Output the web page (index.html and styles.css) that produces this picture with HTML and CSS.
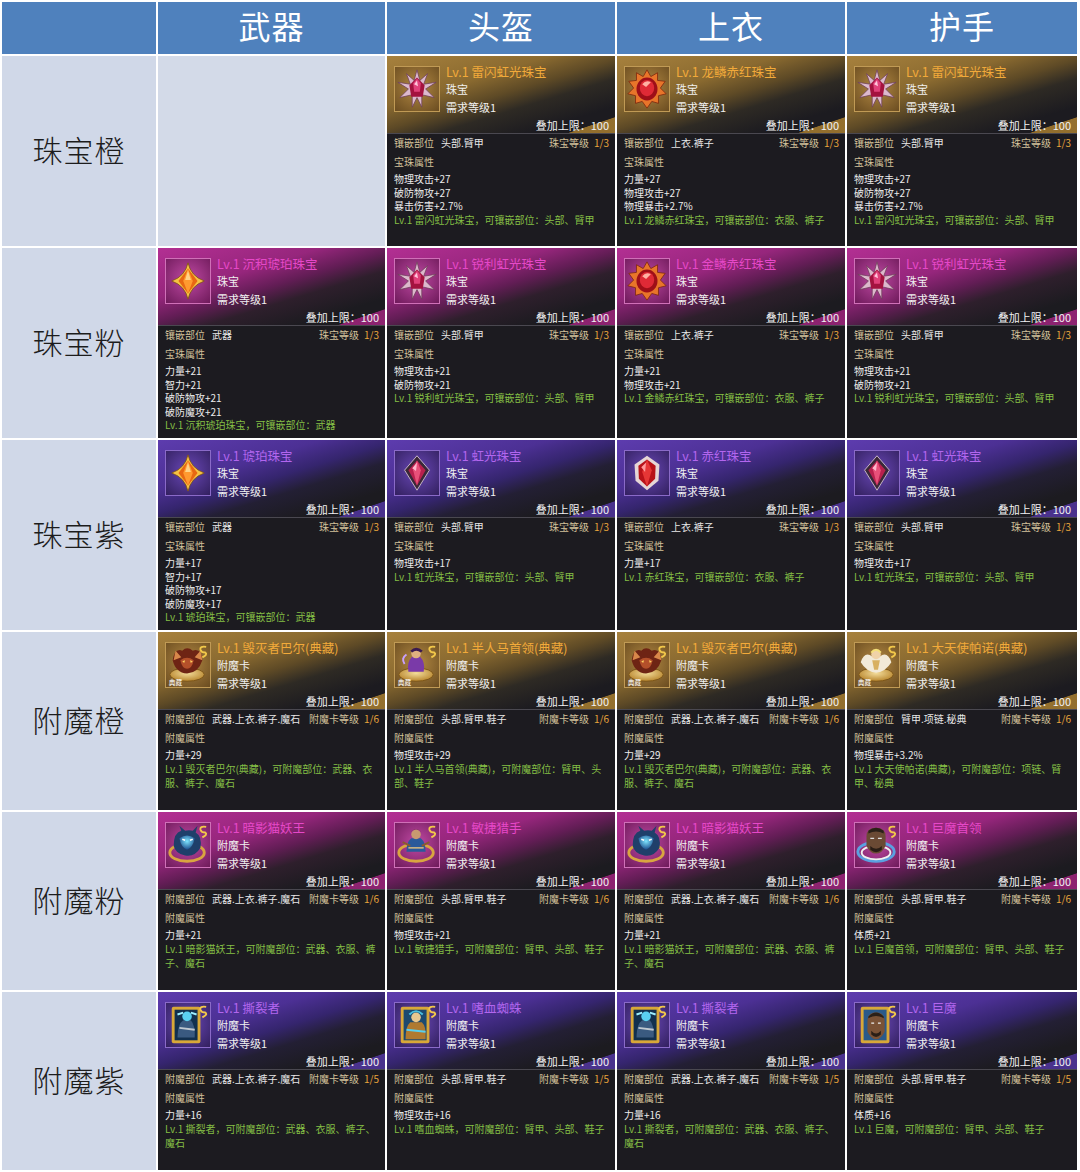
FILE: index.html
```html
<!DOCTYPE html>
<html lang="zh-CN">
<head>
<meta charset="utf-8">
<title>珠宝与附魔卡</title>
<link rel="stylesheet" href="styles.css">
</head>
<body>
<svg class="defs" aria-hidden="true">
  <defs>
    <radialGradient id="rg-gold" cx="50%" cy="40%" r="60%"><stop offset="0" stop-color="#f3dc9a"/><stop offset="1" stop-color="#b8862e"/></radialGradient>
    <radialGradient id="rg-blue" cx="50%" cy="40%" r="60%"><stop offset="0" stop-color="#7fe6ff"/><stop offset="1" stop-color="#1a4a8a"/></radialGradient>
    <symbol id="gem-star" viewBox="0 0 46 46">
      <polygon points="23,3 26,14 34,7 30,18 43,16 32,23 41,32 28,29 28,42 23,32 18,42 18,29 5,32 14,23 3,16 16,18 12,7 20,14" fill="#dcb9cc" stroke="#6e3f5a" stroke-width="0.8"/>
      <polygon points="23,11 31,19 29,31 17,31 15,19" fill="#a3123f"/>
      <path d="M19 17 L23 12 L27 17 L26 26 L20 26Z" fill="#e0407a"/>
      <path d="M20 18 L23 14 L24 20Z" fill="#ffc6dc"/>
    </symbol>
    <symbol id="gem-dragon" viewBox="0 0 46 46">
      <polygon points="23,3 27,10 34,6 34,14 42,15 37,22 43,28 35,30 35,38 28,36 23,43 18,36 11,38 11,30 3,28 9,22 4,15 12,14 12,6 19,10" fill="#e8752a" stroke="#7a240c" stroke-width="0.8"/>
      <ellipse cx="23" cy="23" rx="11" ry="12" fill="#9e0f18"/>
      <ellipse cx="23" cy="22" rx="7.5" ry="8.5" fill="#df2a36"/>
      <path d="M18 18 Q22 13 27 16 L22 21Z" fill="#ffb2a4"/>
    </symbol>
    <symbol id="gem-amber" viewBox="0 0 46 46">
      <path d="M23 4 Q26 18 40 23 Q26 28 23 42 Q20 28 6 23 Q20 18 23 4Z" fill="#f5c244" stroke="#7a4e10" stroke-width="0.8"/>
      <path d="M23 10 L33 23 L23 36 L13 23Z" fill="#e86812"/>
      <path d="M23 10 L28 23 L23 36 L18 23Z" fill="#ff9a30"/>
      <path d="M23 12 L26 22 L20 22Z" fill="#ffd488"/>
    </symbol>
    <symbol id="gem-rh" viewBox="0 0 46 46">
      <path d="M23 5 L36 20 L23 41 L10 20Z" fill="#3a2838" stroke="#c8b8c8" stroke-width="1"/>
      <path d="M23 10 L32 20 L23 36 L14 20Z" fill="#b8204e"/>
      <path d="M23 10 L27 20 L23 36 L19 20Z" fill="#e8507a"/>
      <path d="M18 18 L23 12 L22 21Z" fill="#ffb8cc"/>
    </symbol>
    <symbol id="gem-red" viewBox="0 0 46 46">
      <path d="M23 5 L36 14 L35 31 L23 41 L11 31 L10 14Z" fill="#e6d6d6"/>
      <path d="M23 9 L32 15.5 L31.5 29 L23 37 L14.5 29 L14 15.5Z" fill="#b81219"/>
      <path d="M23 9 L28 20 L23 37 L18 22Z" fill="#e63636"/>
      <path d="M17 17 L22 12 L21 22Z" fill="#ff9a9a"/>
    </symbol>
    <symbol id="swirl" viewBox="0 0 46 46">
      <path d="M42 4 Q35 3 36 7 Q37 10 41 10 Q44 12 38 15" fill="none" stroke="#f2c84a" stroke-width="2"/>
    </symbol>
    <symbol id="ench-baal" viewBox="0 0 46 46">
      <ellipse cx="22" cy="33" rx="18" ry="7" fill="url(#rg-gold)" stroke="#7a5418"/>
      <path d="M7 18 Q9 5 17 8 Q22 3 28 8 Q37 5 38 18 Q34 31 22 32 Q10 31 7 18Z" fill="#6e2414"/>
      <path d="M10 8 L16 15 L8 18Z M36 8 L30 15 L38 18Z" fill="#d8874a"/>
      <path d="M15 18 Q22 13 29 18 Q27 27 22 27 Q17 27 15 18Z" fill="#b4502a"/>
      <path d="M17 19 L20 18 L19 21Z M25 18 L28 19 L26 21Z" fill="#ffd060"/>
      <text x="3" y="44" class="ic-txt">典藏</text>
    </symbol>
    <symbol id="ench-centaur" viewBox="0 0 46 46">
      <ellipse cx="22" cy="33" rx="18" ry="7" fill="url(#rg-gold)" stroke="#7a5418"/>
      <path d="M14 30 Q12 20 18 14 L26 14 Q32 20 30 30Z" fill="#7a3aa8"/>
      <circle cx="22" cy="11" r="5" fill="#e0b080"/>
      <path d="M16 8 Q22 2 29 8 L27 10 Q22 6 18 10Z" fill="#3a1a50"/>
      <path d="M10 22 Q6 16 12 12" fill="none" stroke="#c9a0ff" stroke-width="2"/>
      <text x="3" y="44" class="ic-txt">典藏</text>
    </symbol>
    <symbol id="ench-angel" viewBox="0 0 46 46">
      <ellipse cx="22" cy="33" rx="18" ry="7" fill="url(#rg-gold)" stroke="#7a5418"/>
      <path d="M6 20 Q10 8 18 14 L26 14 Q34 8 38 20 Q32 30 22 31 Q12 30 6 20Z" fill="#f2ead8"/>
      <circle cx="22" cy="12" r="5" fill="#f0d2a8"/>
      <path d="M17 10 Q22 4 27 10" fill="none" stroke="#f5e07a" stroke-width="2"/>
      <path d="M18 18 L26 18 L24 28 L20 28Z" fill="#d8b060"/>
      <text x="3" y="44" class="ic-txt">典藏</text>
    </symbol>
    <symbol id="ench-cat" viewBox="0 0 46 46">
      <ellipse cx="22" cy="31" rx="18" ry="9" fill="none" stroke="#d9a540" stroke-width="3"/>
      <path d="M8 24 Q8 10 16 8 L14 3 L20 8 Q24 7 28 8 L33 3 L31 10 Q38 14 36 26 Q30 36 20 34 Q10 32 8 24Z" fill="#1f3f6a"/>
      <path d="M14 16 Q22 10 30 16 Q28 26 22 28 Q16 26 14 16Z" fill="url(#rg-blue)"/>
      <path d="M17 17 L20 18 M25 18 L28 17" stroke="#fff" stroke-width="1.5"/>
    </symbol>
    <symbol id="ench-hunter" viewBox="0 0 46 46">
      <ellipse cx="22" cy="31" rx="18" ry="9" fill="none" stroke="#d9a540" stroke-width="3"/>
      <path d="M12 30 Q12 20 17 16 L27 16 Q32 20 32 30Z" fill="#2a5a9a"/>
      <circle cx="22" cy="12" r="5" fill="#c89a70"/>
      <path d="M16 10 Q22 3 28 10 L26 8 Q22 5 18 8Z" fill="#5a3a20"/>
      <path d="M8 20 L16 24 M36 20 L28 24" stroke="#8a5a30" stroke-width="2"/>
      <path d="M14 26 L30 26" stroke="#e0c080" stroke-width="1.5"/>
    </symbol>
    <symbol id="ench-troll" viewBox="0 0 46 46">
      <ellipse cx="22" cy="30" rx="19" ry="10" fill="none" stroke="#5aa0e0" stroke-width="3"/>
      <ellipse cx="22" cy="31" rx="15" ry="7" fill="none" stroke="#f0f0f0" stroke-width="2"/>
      <path d="M12 14 Q12 5 22 5 Q32 5 32 14 L32 24 Q28 32 22 32 Q16 32 12 24Z" fill="#6a4a34"/>
      <path d="M14 8 Q22 2 30 8 L30 11 Q22 7 14 11Z" fill="#2a2018"/>
      <path d="M16 24 Q22 30 28 24 L28 28 Q22 33 16 28Z" fill="#2a1e16"/>
      <path d="M16 16 L20 16 M24 16 L28 16" stroke="#ddd" stroke-width="1.3"/>
    </symbol>
    <symbol id="card-ripper" viewBox="0 0 46 46">
      <rect x="6" y="4" width="30" height="38" rx="2" fill="#d8a838"/>
      <rect x="9" y="7" width="24" height="32" fill="#12304e"/>
      <path d="M12 36 Q12 22 18 18 L26 18 Q31 24 30 36Z" fill="#3a5a80"/>
      <circle cx="22" cy="14" r="5" fill="#5ad0f0"/>
      <path d="M12 12 L18 10 M32 12 L26 10" stroke="#9ef0ff" stroke-width="2"/>
      <path d="M14 26 L30 28" stroke="#c0c8d0" stroke-width="2"/>
    </symbol>
    <symbol id="card-spider" viewBox="0 0 46 46">
      <rect x="6" y="4" width="30" height="38" rx="2" fill="#d8a838"/>
      <rect x="9" y="7" width="24" height="32" fill="#1c4a70"/>
      <path d="M11 38 Q11 24 16 20 L28 20 Q33 24 32 38Z" fill="#b07a30"/>
      <circle cx="22" cy="15" r="5" fill="#e8c890"/>
      <path d="M15 12 Q22 5 29 12" fill="none" stroke="#4ac0e0" stroke-width="2"/>
      <path d="M12 28 L32 30" stroke="#58d0f0" stroke-width="2"/>
    </symbol>
    <symbol id="card-troll" viewBox="0 0 46 46">
      <rect x="6" y="4" width="30" height="38" rx="2" fill="#d8a838"/>
      <rect x="9" y="7" width="24" height="32" fill="#2a5a8a"/>
      <path d="M13 20 Q13 10 22 10 Q31 10 31 20 L31 30 Q27 38 22 38 Q17 38 13 30Z" fill="#7a5236"/>
      <path d="M14 14 Q22 6 30 14 L30 16 Q22 11 14 16Z" fill="#2a2018"/>
      <path d="M17 29 Q22 35 27 29 L27 33 Q22 38 17 33Z" fill="#2a1e16"/>
      <path d="M17 21 L20 21 M24 21 L27 21" stroke="#eee" stroke-width="1.3"/>
    </symbol>
  </defs>
</svg>

<div class="sheet">
  <div class="hd"></div>
  <div class="hd">武器</div>
  <div class="hd">头盔</div>
  <div class="hd">上衣</div>
  <div class="hd">护手</div>

  <!-- 珠宝橙 -->
  <div class="rowlabel">珠宝橙</div>
  <div class="cell empty"></div>
  <div class="cell">
    <div class="card q-orange">
      <div class="card-top">
        <div class="icon"><svg viewBox="0 0 46 46"><use href="#gem-star"/></svg></div>
        <div class="info"><div class="title">Lv.1 雷闪虹光珠宝</div><div class="line">珠宝</div><div class="line">需求等级1</div></div>
        <div class="stack">叠加上限：100</div>
      </div>
      <div class="card-body">
        <div class="slot"><span><span class="lbl">镶嵌部位</span><span class="val">头部.臂甲</span></span><span><span class="lbl">珠宝等级</span><span class="num">1/3</span></span></div>
        <div class="attr">宝珠属性</div>
        <div class="stat">物理攻击+27</div>
        <div class="stat">破防物攻+27</div>
        <div class="stat">暴击伤害+2.7%</div>
        <div class="desc">Lv.1 雷闪虹光珠宝，可镶嵌部位：头部、臂甲</div>
      </div>
    </div>
  </div>
  <div class="cell">
    <div class="card q-orange">
      <div class="card-top">
        <div class="icon"><svg viewBox="0 0 46 46"><use href="#gem-dragon"/></svg></div>
        <div class="info"><div class="title">Lv.1 龙鳞赤红珠宝</div><div class="line">珠宝</div><div class="line">需求等级1</div></div>
        <div class="stack">叠加上限：100</div>
      </div>
      <div class="card-body">
        <div class="slot"><span><span class="lbl">镶嵌部位</span><span class="val">上衣.裤子</span></span><span><span class="lbl">珠宝等级</span><span class="num">1/3</span></span></div>
        <div class="attr">宝珠属性</div>
        <div class="stat">力量+27</div>
        <div class="stat">物理攻击+27</div>
        <div class="stat">物理暴击+2.7%</div>
        <div class="desc">Lv.1 龙鳞赤红珠宝，可镶嵌部位：衣服、裤子</div>
      </div>
    </div>
  </div>
  <div class="cell">
    <div class="card q-orange">
      <div class="card-top">
        <div class="icon"><svg viewBox="0 0 46 46"><use href="#gem-star"/></svg></div>
        <div class="info"><div class="title">Lv.1 雷闪虹光珠宝</div><div class="line">珠宝</div><div class="line">需求等级1</div></div>
        <div class="stack">叠加上限：100</div>
      </div>
      <div class="card-body">
        <div class="slot"><span><span class="lbl">镶嵌部位</span><span class="val">头部.臂甲</span></span><span><span class="lbl">珠宝等级</span><span class="num">1/3</span></span></div>
        <div class="attr">宝珠属性</div>
        <div class="stat">物理攻击+27</div>
        <div class="stat">破防物攻+27</div>
        <div class="stat">暴击伤害+2.7%</div>
        <div class="desc">Lv.1 雷闪虹光珠宝，可镶嵌部位：头部、臂甲</div>
      </div>
    </div>
  </div>

  <!-- 珠宝粉 -->
  <div class="rowlabel">珠宝粉</div>
  <div class="cell">
    <div class="card q-pink">
      <div class="card-top">
        <div class="icon"><svg viewBox="0 0 46 46"><use href="#gem-amber"/></svg></div>
        <div class="info"><div class="title">Lv.1 沉积琥珀珠宝</div><div class="line">珠宝</div><div class="line">需求等级1</div></div>
        <div class="stack">叠加上限：100</div>
      </div>
      <div class="card-body">
        <div class="slot"><span><span class="lbl">镶嵌部位</span><span class="val">武器</span></span><span><span class="lbl">珠宝等级</span><span class="num">1/3</span></span></div>
        <div class="attr">宝珠属性</div>
        <div class="stat">力量+21</div>
        <div class="stat">智力+21</div>
        <div class="stat">破防物攻+21</div>
        <div class="stat">破防魔攻+21</div>
        <div class="desc">Lv.1 沉积琥珀珠宝，可镶嵌部位：武器</div>
      </div>
    </div>
  </div>
  <div class="cell">
    <div class="card q-pink">
      <div class="card-top">
        <div class="icon"><svg viewBox="0 0 46 46"><use href="#gem-star"/></svg></div>
        <div class="info"><div class="title">Lv.1 锐利虹光珠宝</div><div class="line">珠宝</div><div class="line">需求等级1</div></div>
        <div class="stack">叠加上限：100</div>
      </div>
      <div class="card-body">
        <div class="slot"><span><span class="lbl">镶嵌部位</span><span class="val">头部.臂甲</span></span><span><span class="lbl">珠宝等级</span><span class="num">1/3</span></span></div>
        <div class="attr">宝珠属性</div>
        <div class="stat">物理攻击+21</div>
        <div class="stat">破防物攻+21</div>
        <div class="desc">Lv.1 锐利虹光珠宝，可镶嵌部位：头部、臂甲</div>
      </div>
    </div>
  </div>
  <div class="cell">
    <div class="card q-pink">
      <div class="card-top">
        <div class="icon"><svg viewBox="0 0 46 46"><use href="#gem-dragon"/></svg></div>
        <div class="info"><div class="title">Lv.1 金鳞赤红珠宝</div><div class="line">珠宝</div><div class="line">需求等级1</div></div>
        <div class="stack">叠加上限：100</div>
      </div>
      <div class="card-body">
        <div class="slot"><span><span class="lbl">镶嵌部位</span><span class="val">上衣.裤子</span></span><span><span class="lbl">珠宝等级</span><span class="num">1/3</span></span></div>
        <div class="attr">宝珠属性</div>
        <div class="stat">力量+21</div>
        <div class="stat">物理攻击+21</div>
        <div class="desc">Lv.1 金鳞赤红珠宝，可镶嵌部位：衣服、裤子</div>
      </div>
    </div>
  </div>
  <div class="cell">
    <div class="card q-pink">
      <div class="card-top">
        <div class="icon"><svg viewBox="0 0 46 46"><use href="#gem-star"/></svg></div>
        <div class="info"><div class="title">Lv.1 锐利虹光珠宝</div><div class="line">珠宝</div><div class="line">需求等级1</div></div>
        <div class="stack">叠加上限：100</div>
      </div>
      <div class="card-body">
        <div class="slot"><span><span class="lbl">镶嵌部位</span><span class="val">头部.臂甲</span></span><span><span class="lbl">珠宝等级</span><span class="num">1/3</span></span></div>
        <div class="attr">宝珠属性</div>
        <div class="stat">物理攻击+21</div>
        <div class="stat">破防物攻+21</div>
        <div class="desc">Lv.1 锐利虹光珠宝，可镶嵌部位：头部、臂甲</div>
      </div>
    </div>
  </div>

  <!-- 珠宝紫 -->
  <div class="rowlabel">珠宝紫</div>
  <div class="cell">
    <div class="card q-purple">
      <div class="card-top">
        <div class="icon"><svg viewBox="0 0 46 46"><use href="#gem-amber"/></svg></div>
        <div class="info"><div class="title">Lv.1 琥珀珠宝</div><div class="line">珠宝</div><div class="line">需求等级1</div></div>
        <div class="stack">叠加上限：100</div>
      </div>
      <div class="card-body">
        <div class="slot"><span><span class="lbl">镶嵌部位</span><span class="val">武器</span></span><span><span class="lbl">珠宝等级</span><span class="num">1/3</span></span></div>
        <div class="attr">宝珠属性</div>
        <div class="stat">力量+17</div>
        <div class="stat">智力+17</div>
        <div class="stat">破防物攻+17</div>
        <div class="stat">破防魔攻+17</div>
        <div class="desc">Lv.1 琥珀珠宝，可镶嵌部位：武器</div>
      </div>
    </div>
  </div>
  <div class="cell">
    <div class="card q-purple">
      <div class="card-top">
        <div class="icon"><svg viewBox="0 0 46 46"><use href="#gem-rh"/></svg></div>
        <div class="info"><div class="title">Lv.1 虹光珠宝</div><div class="line">珠宝</div><div class="line">需求等级1</div></div>
        <div class="stack">叠加上限：100</div>
      </div>
      <div class="card-body">
        <div class="slot"><span><span class="lbl">镶嵌部位</span><span class="val">头部.臂甲</span></span><span><span class="lbl">珠宝等级</span><span class="num">1/3</span></span></div>
        <div class="attr">宝珠属性</div>
        <div class="stat">物理攻击+17</div>
        <div class="desc">Lv.1 虹光珠宝，可镶嵌部位：头部、臂甲</div>
      </div>
    </div>
  </div>
  <div class="cell">
    <div class="card q-purple">
      <div class="card-top">
        <div class="icon"><svg viewBox="0 0 46 46"><use href="#gem-red"/></svg></div>
        <div class="info"><div class="title">Lv.1 赤红珠宝</div><div class="line">珠宝</div><div class="line">需求等级1</div></div>
        <div class="stack">叠加上限：100</div>
      </div>
      <div class="card-body">
        <div class="slot"><span><span class="lbl">镶嵌部位</span><span class="val">上衣.裤子</span></span><span><span class="lbl">珠宝等级</span><span class="num">1/3</span></span></div>
        <div class="attr">宝珠属性</div>
        <div class="stat">力量+17</div>
        <div class="desc">Lv.1 赤红珠宝，可镶嵌部位：衣服、裤子</div>
      </div>
    </div>
  </div>
  <div class="cell">
    <div class="card q-purple">
      <div class="card-top">
        <div class="icon"><svg viewBox="0 0 46 46"><use href="#gem-rh"/></svg></div>
        <div class="info"><div class="title">Lv.1 虹光珠宝</div><div class="line">珠宝</div><div class="line">需求等级1</div></div>
        <div class="stack">叠加上限：100</div>
      </div>
      <div class="card-body">
        <div class="slot"><span><span class="lbl">镶嵌部位</span><span class="val">头部.臂甲</span></span><span><span class="lbl">珠宝等级</span><span class="num">1/3</span></span></div>
        <div class="attr">宝珠属性</div>
        <div class="stat">物理攻击+17</div>
        <div class="desc">Lv.1 虹光珠宝，可镶嵌部位：头部、臂甲</div>
      </div>
    </div>
  </div>

  <!-- 附魔橙 -->
  <div class="rowlabel">附魔橙</div>
  <div class="cell">
    <div class="card q-orange">
      <div class="card-top">
        <div class="icon"><svg viewBox="0 0 46 46"><use href="#ench-baal"/><use href="#swirl"/></svg></div>
        <div class="info"><div class="title">Lv.1 毁灭者巴尔(典藏)</div><div class="line">附魔卡</div><div class="line">需求等级1</div></div>
        <div class="stack">叠加上限：100</div>
      </div>
      <div class="card-body">
        <div class="slot"><span><span class="lbl">附魔部位</span><span class="val">武器.上衣.裤子.魔石</span></span><span><span class="lbl">附魔卡等级</span><span class="num">1/6</span></span></div>
        <div class="attr">附魔属性</div>
        <div class="stat">力量+29</div>
        <div class="desc">Lv.1 毁灭者巴尔(典藏)，可附魔部位：武器、衣服、裤子、魔石</div>
      </div>
    </div>
  </div>
  <div class="cell">
    <div class="card q-orange">
      <div class="card-top">
        <div class="icon"><svg viewBox="0 0 46 46"><use href="#ench-centaur"/><use href="#swirl"/></svg></div>
        <div class="info"><div class="title">Lv.1 半人马首领(典藏)</div><div class="line">附魔卡</div><div class="line">需求等级1</div></div>
        <div class="stack">叠加上限：100</div>
      </div>
      <div class="card-body">
        <div class="slot"><span><span class="lbl">附魔部位</span><span class="val">头部.臂甲.鞋子</span></span><span><span class="lbl">附魔卡等级</span><span class="num">1/6</span></span></div>
        <div class="attr">附魔属性</div>
        <div class="stat">物理攻击+29</div>
        <div class="desc">Lv.1 半人马首领(典藏)，可附魔部位：臂甲、头部、鞋子</div>
      </div>
    </div>
  </div>
  <div class="cell">
    <div class="card q-orange">
      <div class="card-top">
        <div class="icon"><svg viewBox="0 0 46 46"><use href="#ench-baal"/><use href="#swirl"/></svg></div>
        <div class="info"><div class="title">Lv.1 毁灭者巴尔(典藏)</div><div class="line">附魔卡</div><div class="line">需求等级1</div></div>
        <div class="stack">叠加上限：100</div>
      </div>
      <div class="card-body">
        <div class="slot"><span><span class="lbl">附魔部位</span><span class="val">武器.上衣.裤子.魔石</span></span><span><span class="lbl">附魔卡等级</span><span class="num">1/6</span></span></div>
        <div class="attr">附魔属性</div>
        <div class="stat">力量+29</div>
        <div class="desc">Lv.1 毁灭者巴尔(典藏)，可附魔部位：武器、衣服、裤子、魔石</div>
      </div>
    </div>
  </div>
  <div class="cell">
    <div class="card q-orange">
      <div class="card-top">
        <div class="icon"><svg viewBox="0 0 46 46"><use href="#ench-angel"/><use href="#swirl"/></svg></div>
        <div class="info"><div class="title">Lv.1 大天使帕诺(典藏)</div><div class="line">附魔卡</div><div class="line">需求等级1</div></div>
        <div class="stack">叠加上限：100</div>
      </div>
      <div class="card-body">
        <div class="slot"><span><span class="lbl">附魔部位</span><span class="val">臂甲.项链.秘典</span></span><span><span class="lbl">附魔卡等级</span><span class="num">1/6</span></span></div>
        <div class="attr">附魔属性</div>
        <div class="stat">物理暴击+3.2%</div>
        <div class="desc">Lv.1 大天使帕诺(典藏)，可附魔部位：项链、臂甲、秘典</div>
      </div>
    </div>
  </div>

  <!-- 附魔粉 -->
  <div class="rowlabel">附魔粉</div>
  <div class="cell">
    <div class="card q-pink">
      <div class="card-top">
        <div class="icon"><svg viewBox="0 0 46 46"><use href="#ench-cat"/><use href="#swirl"/></svg></div>
        <div class="info"><div class="title">Lv.1 暗影猫妖王</div><div class="line">附魔卡</div><div class="line">需求等级1</div></div>
        <div class="stack">叠加上限：100</div>
      </div>
      <div class="card-body">
        <div class="slot"><span><span class="lbl">附魔部位</span><span class="val">武器.上衣.裤子.魔石</span></span><span><span class="lbl">附魔卡等级</span><span class="num">1/6</span></span></div>
        <div class="attr">附魔属性</div>
        <div class="stat">力量+21</div>
        <div class="desc">Lv.1 暗影猫妖王，可附魔部位：武器、衣服、裤子、魔石</div>
      </div>
    </div>
  </div>
  <div class="cell">
    <div class="card q-pink">
      <div class="card-top">
        <div class="icon"><svg viewBox="0 0 46 46"><use href="#ench-hunter"/><use href="#swirl"/></svg></div>
        <div class="info"><div class="title">Lv.1 敏捷猎手</div><div class="line">附魔卡</div><div class="line">需求等级1</div></div>
        <div class="stack">叠加上限：100</div>
      </div>
      <div class="card-body">
        <div class="slot"><span><span class="lbl">附魔部位</span><span class="val">头部.臂甲.鞋子</span></span><span><span class="lbl">附魔卡等级</span><span class="num">1/6</span></span></div>
        <div class="attr">附魔属性</div>
        <div class="stat">物理攻击+21</div>
        <div class="desc">Lv.1 敏捷猎手，可附魔部位：臂甲、头部、鞋子</div>
      </div>
    </div>
  </div>
  <div class="cell">
    <div class="card q-pink">
      <div class="card-top">
        <div class="icon"><svg viewBox="0 0 46 46"><use href="#ench-cat"/><use href="#swirl"/></svg></div>
        <div class="info"><div class="title">Lv.1 暗影猫妖王</div><div class="line">附魔卡</div><div class="line">需求等级1</div></div>
        <div class="stack">叠加上限：100</div>
      </div>
      <div class="card-body">
        <div class="slot"><span><span class="lbl">附魔部位</span><span class="val">武器.上衣.裤子.魔石</span></span><span><span class="lbl">附魔卡等级</span><span class="num">1/6</span></span></div>
        <div class="attr">附魔属性</div>
        <div class="stat">力量+21</div>
        <div class="desc">Lv.1 暗影猫妖王，可附魔部位：武器、衣服、裤子、魔石</div>
      </div>
    </div>
  </div>
  <div class="cell">
    <div class="card q-pink">
      <div class="card-top">
        <div class="icon"><svg viewBox="0 0 46 46"><use href="#ench-troll"/><use href="#swirl"/></svg></div>
        <div class="info"><div class="title">Lv.1 巨魔首领</div><div class="line">附魔卡</div><div class="line">需求等级1</div></div>
        <div class="stack">叠加上限：100</div>
      </div>
      <div class="card-body">
        <div class="slot"><span><span class="lbl">附魔部位</span><span class="val">头部.臂甲.鞋子</span></span><span><span class="lbl">附魔卡等级</span><span class="num">1/6</span></span></div>
        <div class="attr">附魔属性</div>
        <div class="stat">体质+21</div>
        <div class="desc">Lv.1 巨魔首领，可附魔部位：臂甲、头部、鞋子</div>
      </div>
    </div>
  </div>

  <!-- 附魔紫 -->
  <div class="rowlabel">附魔紫</div>
  <div class="cell">
    <div class="card q-purple">
      <div class="card-top">
        <div class="icon"><svg viewBox="0 0 46 46"><use href="#card-ripper"/><use href="#swirl"/></svg></div>
        <div class="info"><div class="title">Lv.1 撕裂者</div><div class="line">附魔卡</div><div class="line">需求等级1</div></div>
        <div class="stack">叠加上限：100</div>
      </div>
      <div class="card-body">
        <div class="slot"><span><span class="lbl">附魔部位</span><span class="val">武器.上衣.裤子.魔石</span></span><span><span class="lbl">附魔卡等级</span><span class="num">1/5</span></span></div>
        <div class="attr">附魔属性</div>
        <div class="stat">力量+16</div>
        <div class="desc">Lv.1 撕裂者，可附魔部位：武器、衣服、裤子、魔石</div>
      </div>
    </div>
  </div>
  <div class="cell">
    <div class="card q-purple">
      <div class="card-top">
        <div class="icon"><svg viewBox="0 0 46 46"><use href="#card-spider"/><use href="#swirl"/></svg></div>
        <div class="info"><div class="title">Lv.1 嗜血蜘蛛</div><div class="line">附魔卡</div><div class="line">需求等级1</div></div>
        <div class="stack">叠加上限：100</div>
      </div>
      <div class="card-body">
        <div class="slot"><span><span class="lbl">附魔部位</span><span class="val">头部.臂甲.鞋子</span></span><span><span class="lbl">附魔卡等级</span><span class="num">1/5</span></span></div>
        <div class="attr">附魔属性</div>
        <div class="stat">物理攻击+16</div>
        <div class="desc">Lv.1 嗜血蜘蛛，可附魔部位：臂甲、头部、鞋子</div>
      </div>
    </div>
  </div>
  <div class="cell">
    <div class="card q-purple">
      <div class="card-top">
        <div class="icon"><svg viewBox="0 0 46 46"><use href="#card-ripper"/><use href="#swirl"/></svg></div>
        <div class="info"><div class="title">Lv.1 撕裂者</div><div class="line">附魔卡</div><div class="line">需求等级1</div></div>
        <div class="stack">叠加上限：100</div>
      </div>
      <div class="card-body">
        <div class="slot"><span><span class="lbl">附魔部位</span><span class="val">武器.上衣.裤子.魔石</span></span><span><span class="lbl">附魔卡等级</span><span class="num">1/5</span></span></div>
        <div class="attr">附魔属性</div>
        <div class="stat">力量+16</div>
        <div class="desc">Lv.1 撕裂者，可附魔部位：武器、衣服、裤子、魔石</div>
      </div>
    </div>
  </div>
  <div class="cell">
    <div class="card q-purple">
      <div class="card-top">
        <div class="icon"><svg viewBox="0 0 46 46"><use href="#card-troll"/><use href="#swirl"/></svg></div>
        <div class="info"><div class="title">Lv.1 巨魔</div><div class="line">附魔卡</div><div class="line">需求等级1</div></div>
        <div class="stack">叠加上限：100</div>
      </div>
      <div class="card-body">
        <div class="slot"><span><span class="lbl">附魔部位</span><span class="val">头部.臂甲.鞋子</span></span><span><span class="lbl">附魔卡等级</span><span class="num">1/5</span></span></div>
        <div class="attr">附魔属性</div>
        <div class="stat">体质+16</div>
        <div class="desc">Lv.1 巨魔，可附魔部位：臂甲、头部、鞋子</div>
      </div>
    </div>
  </div>
</div>
</body>
</html>
```

FILE: styles.css
```css
html, body {
  margin: 0;
  padding: 0;
  background: #ffffff;
}

body {
  font-family: "Noto Sans CJK SC", "Noto Sans", sans-serif;
}

.defs {
  position: absolute;
  width: 0;
  height: 0;
  overflow: hidden;
}

.sheet {
  display: grid;
  grid-template-columns: 154px 227px 228px 228px 1fr;
  grid-template-rows: 52px 190px 190px 190px 178px 178px 178px;
  gap: 2px;
  padding: 2px 3px 2px 2px;
  width: 1080px;
  height: 1172px;
  box-sizing: border-box;
  background: #ffffff;
}

.hd {
  background: #4f81bd;
  color: #ffffff;
  font-size: 32px;
  line-height: 46px;
  padding-bottom: 6px;
  text-align: center;
  font-weight: 400;
  letter-spacing: 1px;
}

.rowlabel {
  background: #d0d8e8;
  color: #1c1c1c;
  font-size: 30px;
  font-weight: 300;
  display: flex;
  align-items: center;
  justify-content: center;
  padding-bottom: 4px;
  letter-spacing: 1px;
}

.cell {
  display: flex;
  min-width: 0;
}

.cell.empty {
  background: #d3dae8;
}

.card {
  flex: 1;
  display: flex;
  flex-direction: column;
  background: #1c1b20;
  color: #e6e6e6;
  overflow: hidden;
}

.card-top {
  height: 78px;
  box-sizing: border-box;
  padding: 8px 6px 0 7px;
  display: grid;
  grid-template-columns: 46px 1fr;
  grid-template-rows: 52px 18px;
  column-gap: 6px;
  border-bottom: 1px solid #4a4850;
}

.icon {
  width: 46px;
  height: 46px;
  box-sizing: border-box;
  margin-top: 2px;
  border: 1px solid rgba(255, 255, 255, 0.35);
}

.icon svg {
  display: block;
  width: 100%;
  height: 100%;
}

.info {
  min-width: 0;
}

.title {
  font-size: 12.5px;
  line-height: 16px;
  white-space: nowrap;
}

.line {
  font-size: 11px;
  line-height: 18px;
  color: #f0f0f0;
}

.stack {
  grid-column: 1 / -1;
  text-align: right;
  font-size: 11px;
  line-height: 18px;
  color: #f2f2f2;
}

.card-body {
  padding: 0 6px 0 7px;
  font-size: 10px;
}

.slot {
  display: flex;
  justify-content: space-between;
  line-height: 18px;
  white-space: nowrap;
}

.lbl {
  color: #d2c19a;
}

.val {
  color: #e8e8e8;
  margin-left: 7px;
}

.num {
  color: #e9a53c;
  margin-left: 5px;
}

.attr {
  color: #d2c19a;
  line-height: 20px;
}

.stat {
  line-height: 13.5px;
  color: #ececec;
}

.desc {
  line-height: 14px;
  color: #84bf45;
}

.ic-txt {
  font-size: 7px;
  fill: #ffffff;
  font-family: "Noto Sans CJK SC", sans-serif;
}

/* quality: orange */
.q-orange .title { color: #f2aa3a; }
.q-orange .card-top {
  background:
    linear-gradient(to top left, rgba(168, 126, 48, 0.85) 0, rgba(168, 126, 48, 0.85) 10%, transparent 10.5%),
    linear-gradient(163deg, #a7813d 0%, #8a6a30 34%, #5e4a26 50%, #2e2a24 63%, #1c1b20 82%);
}
.q-orange .icon {
  background: radial-gradient(circle at 50% 45%, #b48a44 0%, #6a4c20 100%);
  border-color: #c09a55;
}

/* quality: pink */
.q-pink .title { color: #e648c8; }
.q-pink .card-top {
  background:
    linear-gradient(to top left, rgba(160, 36, 126, 0.85) 0, rgba(160, 36, 126, 0.85) 10%, transparent 10.5%),
    linear-gradient(163deg, #b32f93 0%, #96267c 34%, #621d55 50%, #2e1f2c 63%, #1c1b20 82%);
}
.q-pink .icon {
  background: radial-gradient(circle at 50% 45%, #c04aa4 0%, #6e1a5a 100%);
  border-color: #d070b8;
}

/* quality: purple */
.q-purple .title { color: #b266ee; }
.q-purple .card-top {
  background:
    linear-gradient(to top left, rgba(82, 54, 160, 0.85) 0, rgba(82, 54, 160, 0.85) 10%, transparent 10.5%),
    linear-gradient(163deg, #5d3cae 0%, #4c3094 34%, #35256e 50%, #231f34 63%, #1c1b20 82%);
}
.q-purple .icon {
  background: radial-gradient(circle at 50% 45%, #6a48b8 0%, #32205e 100%);
  border-color: #8a6ac8;
}
```
